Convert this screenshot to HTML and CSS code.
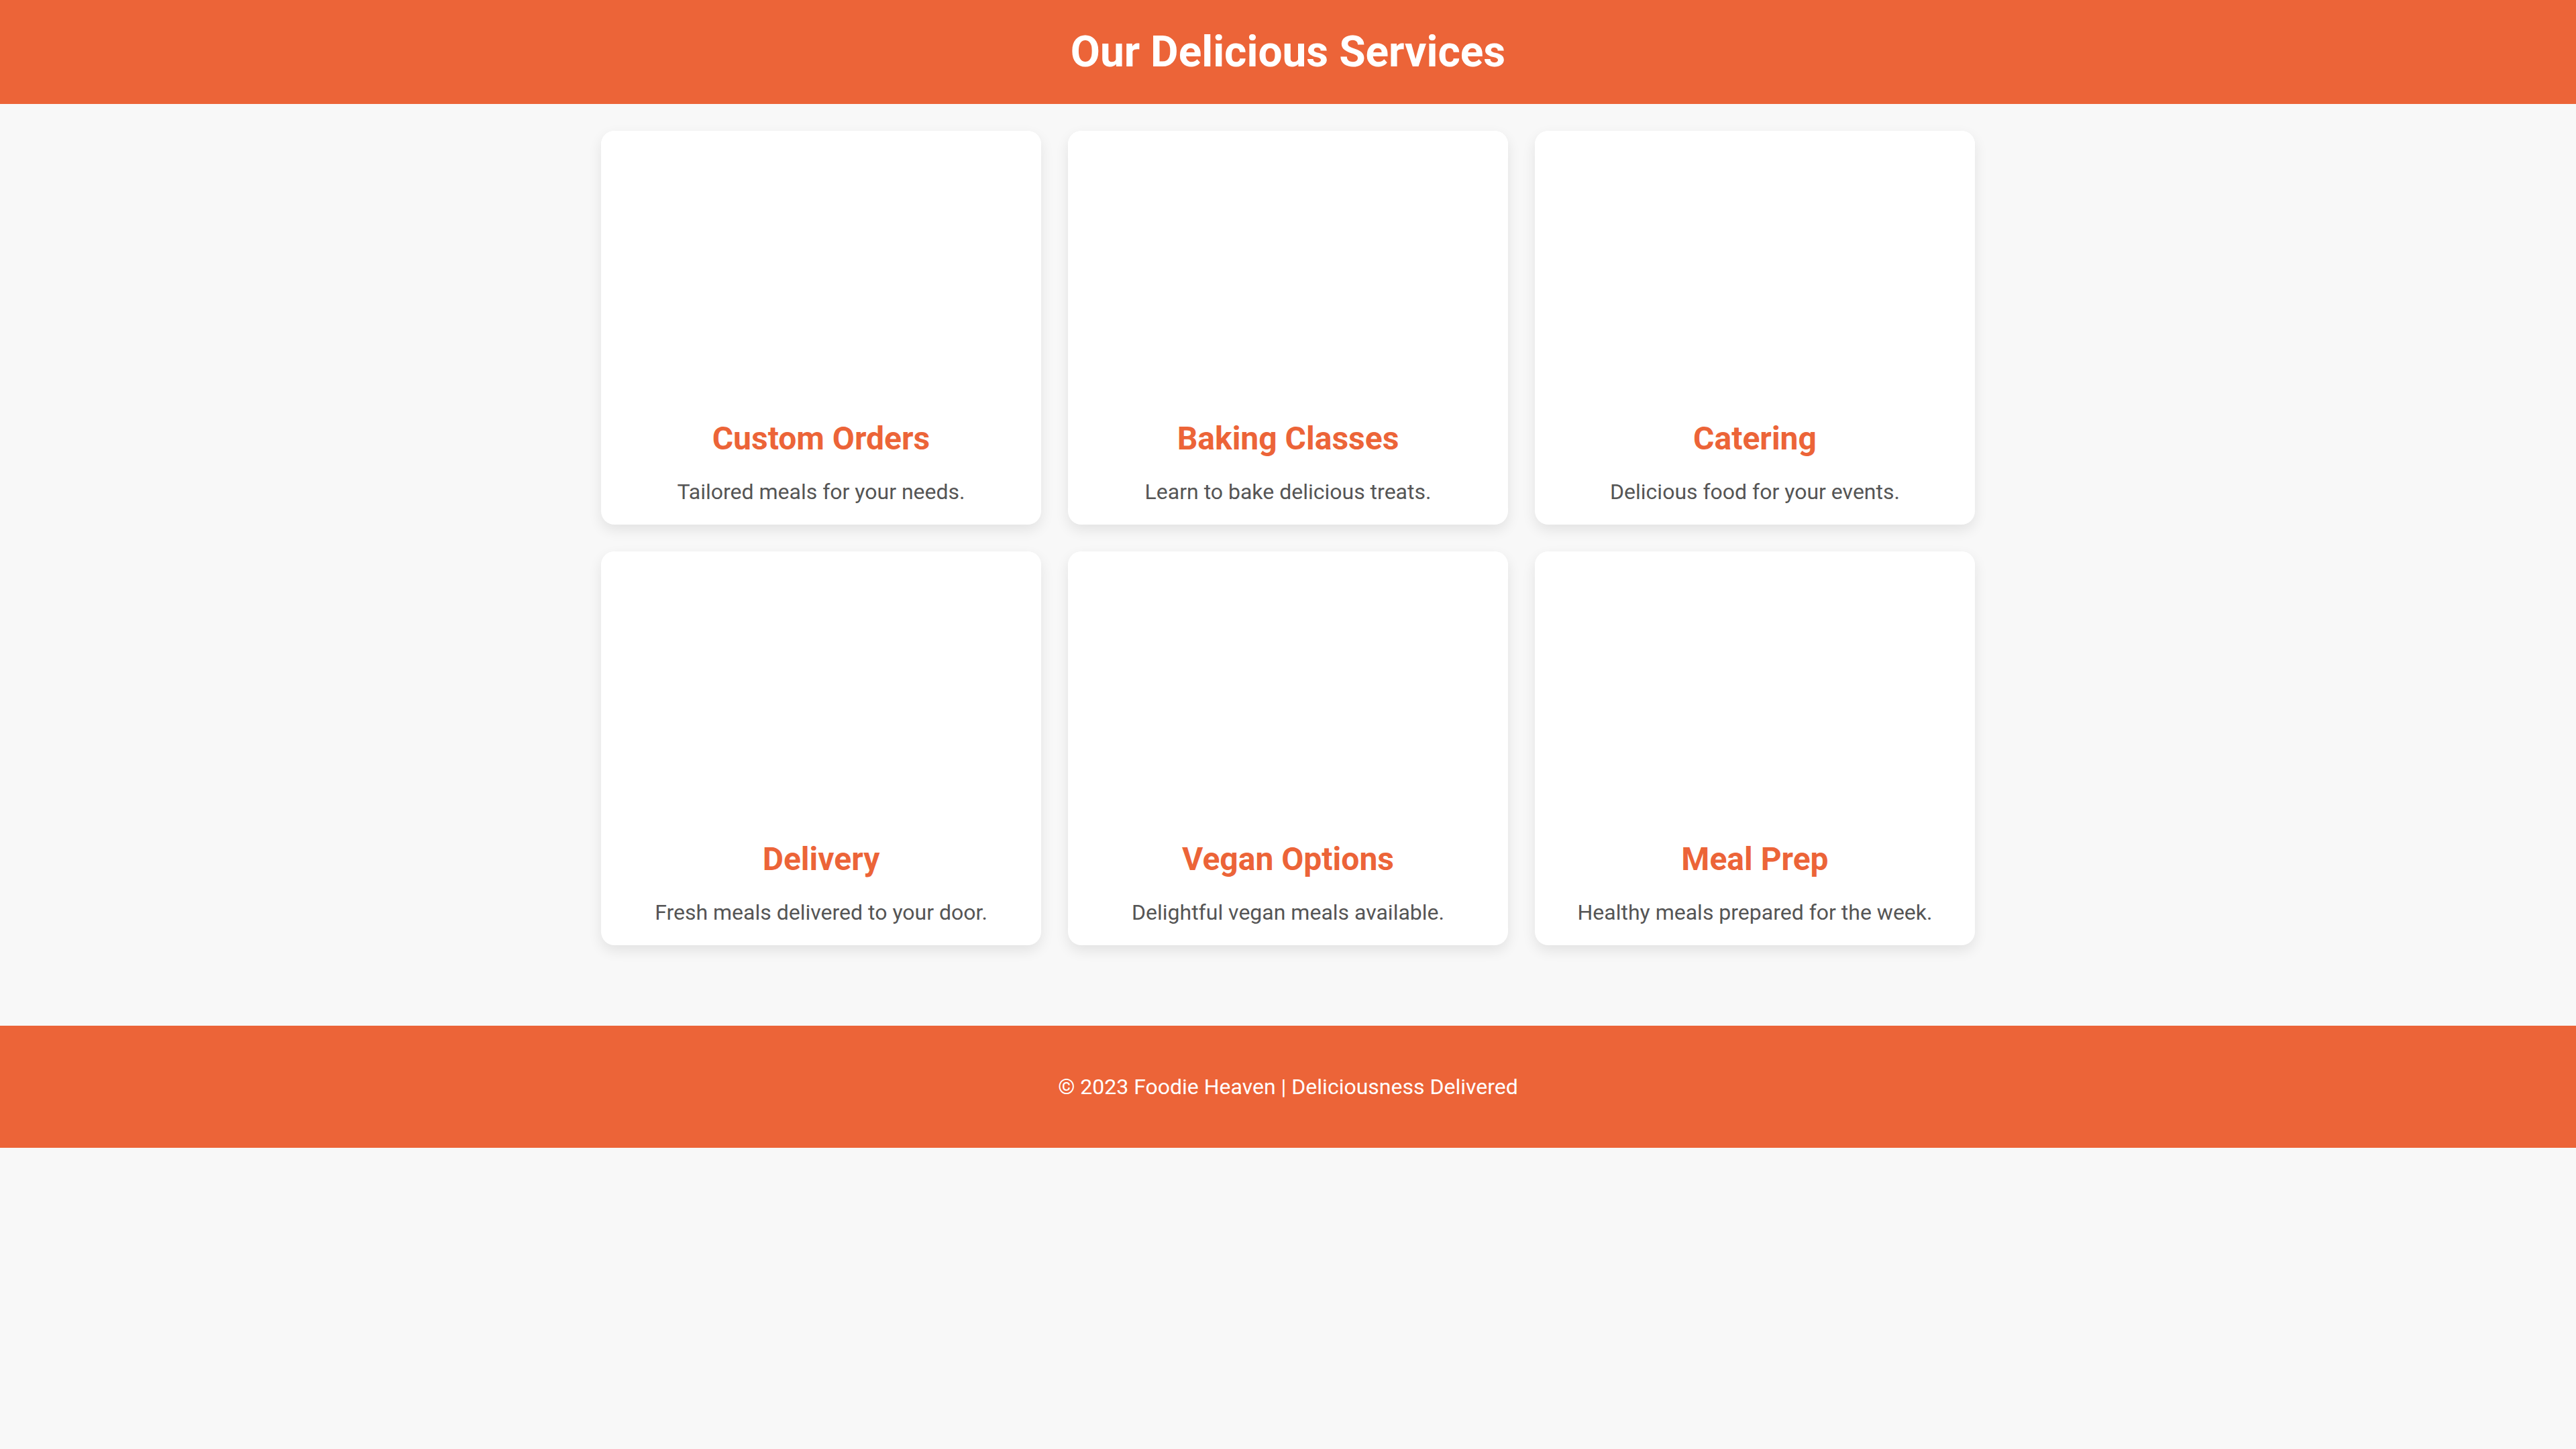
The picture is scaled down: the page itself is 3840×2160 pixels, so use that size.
FILE: index.html
```html
<!DOCTYPE html>
<html lang="en">
<head>
<meta charset="utf-8">
<title>Our Delicious Services</title>
<link rel="stylesheet" href="styles.css">
</head>
<body>
<header class="site-header">
  <h1 class="site-title">Our Delicious Services</h1>
</header>
<main class="services">
  <div class="card">
    <div class="card-media"></div>
    <div class="card-body">
      <h3 class="card-title">Custom Orders</h3>
      <p class="card-text">Tailored meals for your needs.</p>
    </div>
  </div>
  <div class="card">
    <div class="card-media"></div>
    <div class="card-body">
      <h3 class="card-title">Baking Classes</h3>
      <p class="card-text">Learn to bake delicious treats.</p>
    </div>
  </div>
  <div class="card">
    <div class="card-media"></div>
    <div class="card-body">
      <h3 class="card-title">Catering</h3>
      <p class="card-text">Delicious food for your events.</p>
    </div>
  </div>
  <div class="card">
    <div class="card-media"></div>
    <div class="card-body">
      <h3 class="card-title">Delivery</h3>
      <p class="card-text">Fresh meals delivered to your door.</p>
    </div>
  </div>
  <div class="card">
    <div class="card-media"></div>
    <div class="card-body">
      <h3 class="card-title">Vegan Options</h3>
      <p class="card-text">Delightful vegan meals available.</p>
    </div>
  </div>
  <div class="card">
    <div class="card-media"></div>
    <div class="card-body">
      <h3 class="card-title">Meal Prep</h3>
      <p class="card-text">Healthy meals prepared for the week.</p>
    </div>
  </div>
</main>
<footer class="site-footer">
  <p class="footer-text">© 2023 Foodie Heaven | Deliciousness Delivered</p>
</footer>
</body>
</html>
```
FILE: styles.css
```css
html, body {
  margin: 0;
  padding: 0;
}

body {
  background: #f8f8f8;
  font-family: Roboto, "Liberation Sans", Arial, sans-serif;
  color: #555555;
}

.site-header {
  background: #ec6438;
  padding: 40px 0;
  text-align: center;
}

.site-title {
  margin: 0;
  color: #ffffff;
  font-size: 64px;
  font-weight: 700;
  line-height: normal;
}

.services {
  width: 2048px;
  margin: 40px auto 120px;
  display: grid;
  grid-template-columns: repeat(3, 1fr);
  gap: 40px;
}

.card {
  background: #ffffff;
  border-radius: 20px;
  box-shadow: 0 8px 20px rgba(0, 0, 0, 0.09);
  overflow: hidden;
  display: flex;
  flex-direction: column;
}

.card-media {
  height: 400px;
  background: #ffffff;
}

.card-body {
  padding: 30px 30px 30px;
  text-align: center;
}

.card-title {
  margin: 0 0 32px;
  color: #ec6438;
  font-size: 48px;
  font-weight: 700;
  line-height: normal;
}

.card-text {
  margin: 0;
  color: #555555;
  font-size: 32px;
  line-height: normal;
}

.site-footer {
  background: #ec6438;
  padding: 72px 0;
  text-align: center;
}

.footer-text {
  margin: 0;
  color: #ffffff;
  font-size: 32px;
  line-height: normal;
}
```
